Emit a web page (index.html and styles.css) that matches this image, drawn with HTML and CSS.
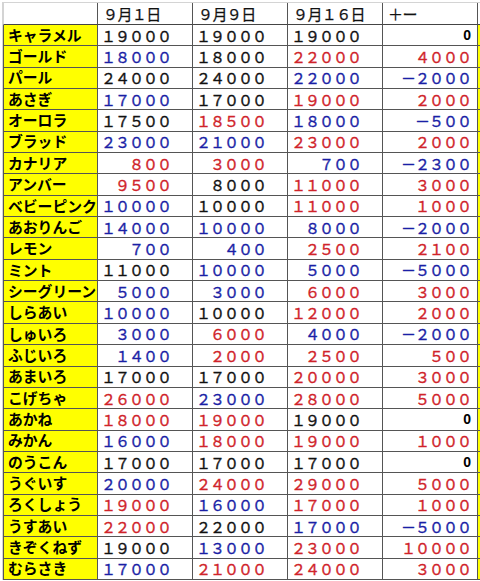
FILE: index.html
```html
<!DOCTYPE html>
<html lang="ja">
<head>
<meta charset="utf-8">
<title>色の推移</title>
<link rel="stylesheet" href="styles.css">
</head>
<body>
<div class="sheet">
  <div class="cell head first"></div>
  <div class="cell head hd">９月１日</div>
  <div class="cell head hd">９月９日</div>
  <div class="cell head hd">９月１６日</div>
  <div class="cell head hd">＋ー</div>
  <div class="cell head extra"></div>

  <div class="cell name">キャラメル</div><div class="cell num k">１９０００</div><div class="cell num k">１９０００</div><div class="cell num k">１９０００</div><div class="cell diff zero">0</div><div class="cell extra y"></div>
  <div class="cell name">ゴールド</div><div class="cell num b">１８０００</div><div class="cell num k">１８０００</div><div class="cell num r">２２０００</div><div class="cell diff r">４０００</div><div class="cell extra y"></div>
  <div class="cell name">パール</div><div class="cell num k">２４０００</div><div class="cell num k">２４０００</div><div class="cell num b">２２０００</div><div class="cell diff b">－２０００</div><div class="cell extra y"></div>
  <div class="cell name">あさぎ</div><div class="cell num b">１７０００</div><div class="cell num k">１７０００</div><div class="cell num r">１９０００</div><div class="cell diff r">２０００</div><div class="cell extra y"></div>
  <div class="cell name">オーロラ</div><div class="cell num k">１７５００</div><div class="cell num r">１８５００</div><div class="cell num b">１８０００</div><div class="cell diff b">－５００</div><div class="cell extra y"></div>
  <div class="cell name">ブラッド</div><div class="cell num b">２３０００</div><div class="cell num b">２１０００</div><div class="cell num r">２３０００</div><div class="cell diff r">２０００</div><div class="cell extra y"></div>
  <div class="cell name">カナリア</div><div class="cell num r">８００</div><div class="cell num r">３０００</div><div class="cell num b">７００</div><div class="cell diff b">－２３００</div><div class="cell extra y"></div>
  <div class="cell name">アンバー</div><div class="cell num r">９５００</div><div class="cell num k">８０００</div><div class="cell num r">１１０００</div><div class="cell diff r">３０００</div><div class="cell extra y"></div>
  <div class="cell name">ベビーピンク</div><div class="cell num b">１００００</div><div class="cell num k">１００００</div><div class="cell num r">１１０００</div><div class="cell diff r">１０００</div><div class="cell extra y"></div>
  <div class="cell name">あおりんご</div><div class="cell num b">１４０００</div><div class="cell num b">１００００</div><div class="cell num b">８０００</div><div class="cell diff b">－２０００</div><div class="cell extra y"></div>
  <div class="cell name">レモン</div><div class="cell num b">７００</div><div class="cell num b">４００</div><div class="cell num r">２５００</div><div class="cell diff r">２１００</div><div class="cell extra y"></div>
  <div class="cell name">ミント</div><div class="cell num k">１１０００</div><div class="cell num b">１００００</div><div class="cell num b">５０００</div><div class="cell diff b">－５０００</div><div class="cell extra y"></div>
  <div class="cell name">シーグリーン</div><div class="cell num b">５０００</div><div class="cell num b">３０００</div><div class="cell num r">６０００</div><div class="cell diff r">３０００</div><div class="cell extra y"></div>
  <div class="cell name">しらあい</div><div class="cell num b">１００００</div><div class="cell num k">１００００</div><div class="cell num r">１２０００</div><div class="cell diff r">２０００</div><div class="cell extra y"></div>
  <div class="cell name">しゅいろ</div><div class="cell num b">３０００</div><div class="cell num r">６０００</div><div class="cell num b">４０００</div><div class="cell diff b">－２０００</div><div class="cell extra y"></div>
  <div class="cell name">ふじいろ</div><div class="cell num b">１４００</div><div class="cell num r">２０００</div><div class="cell num r">２５００</div><div class="cell diff r">５００</div><div class="cell extra y"></div>
  <div class="cell name">あまいろ</div><div class="cell num k">１７０００</div><div class="cell num k">１７０００</div><div class="cell num r">２００００</div><div class="cell diff r">３０００</div><div class="cell extra y"></div>
  <div class="cell name">こげちゃ</div><div class="cell num r">２６０００</div><div class="cell num b">２３０００</div><div class="cell num r">２８０００</div><div class="cell diff r">５０００</div><div class="cell extra y"></div>
  <div class="cell name">あかね</div><div class="cell num r">１８０００</div><div class="cell num r">１９０００</div><div class="cell num k">１９０００</div><div class="cell diff zero">0</div><div class="cell extra y"></div>
  <div class="cell name">みかん</div><div class="cell num b">１６０００</div><div class="cell num r">１８０００</div><div class="cell num r">１９０００</div><div class="cell diff r">１０００</div><div class="cell extra y"></div>
  <div class="cell name">のうこん</div><div class="cell num k">１７０００</div><div class="cell num k">１７０００</div><div class="cell num k">１７０００</div><div class="cell diff zero">0</div><div class="cell extra y"></div>
  <div class="cell name">うぐいす</div><div class="cell num b">２００００</div><div class="cell num r">２４０００</div><div class="cell num r">２９０００</div><div class="cell diff r">５０００</div><div class="cell extra y"></div>
  <div class="cell name">ろくしょう</div><div class="cell num r">１９０００</div><div class="cell num b">１６０００</div><div class="cell num r">１７０００</div><div class="cell diff r">１０００</div><div class="cell extra y"></div>
  <div class="cell name">うすあい</div><div class="cell num r">２２０００</div><div class="cell num k">２２０００</div><div class="cell num b">１７０００</div><div class="cell diff b">－５０００</div><div class="cell extra y"></div>
  <div class="cell name">きぞくねず</div><div class="cell num k">１９０００</div><div class="cell num b">１３０００</div><div class="cell num r">２３０００</div><div class="cell diff r">１００００</div><div class="cell extra y"></div>
  <div class="cell name">むらさき</div><div class="cell num b">１７０００</div><div class="cell num r">２１０００</div><div class="cell num r">２４０００</div><div class="cell diff r">３０００</div><div class="cell extra y"></div>
</div>
</body>
</html>
```
FILE: styles.css
```css
html, body {
  margin: 0;
  padding: 0;
  background: #ffffff;
  overflow: hidden;
}
body {
  width: 480px;
  height: 581px;
  font-family: "Noto Sans CJK JP", "Noto Sans", sans-serif;
  font-size: 14px;
  color: #111;
}
.sheet {
  margin: 2px 0 0 2px;
  width: 478px;
  display: grid;
  grid-template-columns: repeat(5, 95px) 1fr;
  grid-template-rows: 22px repeat(26, 21.35px);
  border-top: 1px solid #d4d4d4;
  border-left: 1px solid #d4d4d4;
  box-sizing: border-box;
}
.cell {
  box-sizing: border-box;
  border-right: 1px solid #555;
  border-bottom: 1px solid #555;
  display: flex;
  align-items: center;
  white-space: nowrap;
  overflow: hidden;
  line-height: 1;
  min-width: 0;
}
.head {
  background: #fff;
  border-bottom: 1px solid #444;
}
.hd {
  padding-left: 5px;
  color: #111;
  font-size: 15px;
  letter-spacing: -0.6px;
  -webkit-text-stroke: 0.25px currentColor;
}
.name {
  background: #ffff00;
  font-weight: 700;
  font-size: 14.8px;
  padding-left: 4px;
  color: #000;
  border-left: 1px solid #555;
}
.first {
  border-left: 1px solid #d4d4d4;
}
.num, .diff {
  justify-content: flex-end;
  background: #fff;
  font-size: 15px;
  letter-spacing: -1px;
  -webkit-text-stroke: 0.35px currentColor;
}
.num {
  padding-right: 21px;
}
.diff {
  padding-right: 6px;
}
.zero {
  font-family: "Liberation Sans", "Noto Sans", sans-serif;
  font-weight: 700;
  font-size: 14px;
  letter-spacing: 0;
  -webkit-text-stroke: 0;
  color: #000;
  padding-right: 6px;
}
.extra {
  border-right: none;
}
.y {
  background: #ffff00;
}
.k { color: #111; }
.b { color: #1a1fa6; }
.r { color: #d0232a; }
```
